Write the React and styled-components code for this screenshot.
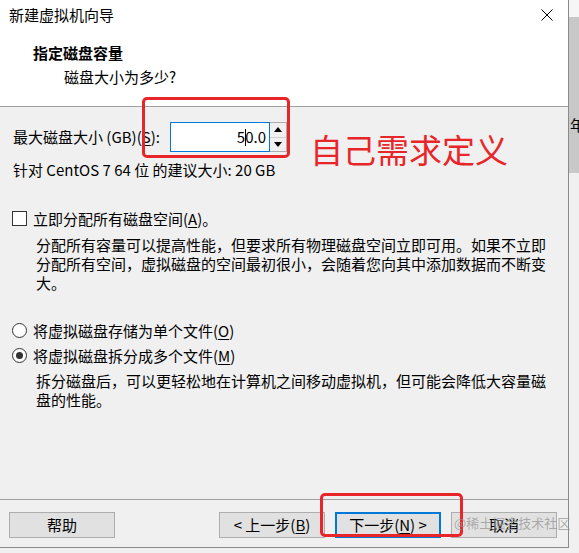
import React from "react";
import styled, { createGlobalStyle } from "styled-components";

const GlobalStyle = createGlobalStyle`
  html, body {
    margin: 0;
    padding: 0;
    background: #f0f0f0;
  }
  body {
    font-family: "Noto Sans CJK SC", "Noto Sans", sans-serif;
  }
`;

const Screen = styled.div`
  position: relative;
  display: flex;
  width: 579px;
  height: 553px;
  overflow: hidden;
  background: #f0f0f0;
  font-family: "Noto Sans CJK SC", "Noto Sans", sans-serif;
  font-size: 15px;
  color: #000;
`;

const Dialog = styled.div`
  display: flex;
  flex-direction: column;
  box-sizing: border-box;
  width: 569px;
  height: 548px;
  border-right: 1px solid #8a8a8a;
  border-bottom: 1px solid #8a8a8a;
  background: #f0f0f0;
`;

const Header = styled.div`
  box-sizing: border-box;
  height: 107px;
  background: #fff;
  border-bottom: 1px solid #a0a0a0;
`;

const TitleBar = styled.div`
  display: flex;
  justify-content: space-between;
  align-items: center;
  padding: 5px 15px 0 9px;
  line-height: 20px;
`;

const Heading = styled.div`
  margin-top: 18px;
  padding-left: 33px;
  font-weight: bold;
  line-height: 20px;
`;

const SubHeading = styled.div`
  margin-top: 4px;
  padding-left: 64px;
  line-height: 20px;
`;

const Body = styled.div`
  flex: 1;
  padding: 15px 0 0 13px;
`;

const SizeRow = styled.div`
  display: flex;
  align-items: center;
  height: 30px;
`;

const SizeLabel = styled.div`
  width: 157px;
  line-height: 20px;
`;

const Input = styled.div`
  box-sizing: border-box;
  width: 100px;
  height: 30px;
  border: 1px solid #0078d7;
  background: #fff;
  text-align: right;
  padding-right: 3px;
  line-height: 28px;
`;

const Caret = styled.span`
  display: inline-block;
  width: 1px;
  height: 17px;
  margin-right: -1px;
  background: #000;
  vertical-align: -3px;
`;

const Spinner = styled.div`
  display: flex;
  flex-direction: column;
  box-sizing: border-box;
  width: 17px;
  height: 30px;
  border: 1px solid #adadad;
  border-left: none;
`;

const SpinButton = styled.div`
  flex: 1;
  display: flex;
  align-items: center;
  justify-content: center;
  background: #f0f0f0;
  border-top: ${(p) => (p.$bottom ? "1px solid #d0d0d0" : "none")};
`;

const Line = styled.div`
  line-height: 20px;
  margin-top: ${(p) => p.$top || 0}px;
`;

const OptionRow = styled.div`
  display: flex;
  align-items: center;
  gap: 6px;
  height: 20px;
  margin-top: ${(p) => p.$top || 0}px;
  margin-left: -1px;
`;

const CheckBox = styled.div`
  box-sizing: border-box;
  width: 15px;
  height: 15px;
  border: 1px solid #333;
  background: #fff;
`;

const Radio = styled.div`
  display: flex;
  align-items: center;
  justify-content: center;
  box-sizing: border-box;
  width: 15px;
  height: 15px;
  border: 1px solid #333;
  border-radius: 50%;
  background: #fff;

  &::after {
    content: "";
    width: 7px;
    height: 7px;
    border-radius: 50%;
    background: ${(p) => (p.$checked ? "#333" : "transparent")};
  }
`;

const Desc = styled.div`
  margin-top: ${(p) => p.$top || 0}px;
  padding-left: 23px;
  line-height: 19px;
  white-space: nowrap;
`;

const U = styled.span`
  text-decoration: underline;
  text-underline-offset: 2px;
`;

const Footer = styled.div`
  display: flex;
  gap: 10px;
  padding: 12px 11px 9px 9px;
  border-top: 1px solid #a0a0a0;
`;

const Button = styled.div`
  box-sizing: border-box;
  display: flex;
  align-items: center;
  justify-content: center;
  width: 106px;
  height: 26px;
  background: #e1e1e1;
  border: ${(p) => (p.$default ? "2px solid #0078d7" : "1px solid #adadad")};
  line-height: 20px;
  margin-right: ${(p) => (p.$push ? "auto" : "0")};
`;

const Strip = styled.div`
  display: flex;
  flex-direction: column;
  width: 10px;
  height: 553px;
  overflow: hidden;
`;

const StripTop = styled.div`
  height: 17px;
  background: #f6f6f6;
`;

const StripGray = styled.div`
  height: 156px;
  background: #c8c8c8;
  padding: 98px 0 0 1px;
  box-sizing: border-box;
  line-height: 20px;
  white-space: nowrap;
`;

const StripRest = styled.div`
  flex: 1;
  background: #f0f0f0;
`;

const RedBox = styled.div`
  position: absolute;
  box-sizing: border-box;
  left: ${(p) => p.$x}px;
  top: ${(p) => p.$y}px;
  width: ${(p) => p.$w}px;
  height: ${(p) => p.$h}px;
  border: 3px solid #e8262a;
  border-radius: 5px;
  pointer-events: none;
`;

const RedNote = styled.div`
  position: absolute;
  left: 310px;
  top: 129px;
  font-size: 33px;
  line-height: 40px;
  color: #e8262a;
  white-space: nowrap;
`;

const Watermark = styled.div`
  position: absolute;
  left: 454px;
  top: 514px;
  font-size: 13px;
  line-height: 18px;
  color: rgba(150, 150, 150, 0.75);
  white-space: nowrap;
`;

function CloseIcon() {
  return (
    <svg width="12" height="12" viewBox="0 0 12 12">
      <path d="M0.5 0.5 L11.5 11.5 M11.5 0.5 L0.5 11.5" stroke="#000" strokeWidth="1" />
    </svg>
  );
}

function Arrow({ down }) {
  return (
    <svg width="8" height="5" viewBox="0 0 8 5">
      <path d={down ? "M0 0 H8 L4 5 Z" : "M0 5 H8 L4 0 Z"} fill="#000" />
    </svg>
  );
}

export default function App() {
  return (
    <Screen>
      <GlobalStyle />
      <Dialog>
        <Header>
          <TitleBar>
            <span>新建虚拟机向导</span>
            <CloseIcon />
          </TitleBar>
          <Heading>指定磁盘容量</Heading>
          <SubHeading>磁盘大小为多少?</SubHeading>
        </Header>

        <Body>
          <SizeRow>
            <SizeLabel>
              最大磁盘大小 (GB)(<U>S</U>):
            </SizeLabel>
            <Input>
              5<Caret />0.0
            </Input>
            <Spinner>
              <SpinButton>
                <Arrow />
              </SpinButton>
              <SpinButton $bottom>
                <Arrow down />
              </SpinButton>
            </Spinner>
          </SizeRow>
          <Line $top={8}>针对 CentOS 7 64 位 的建议大小: 20 GB</Line>

          <OptionRow $top={28}>
            <CheckBox />
            <span>
              立即分配所有磁盘空间(<U>A</U>)。
            </span>
          </OptionRow>
          <Desc $top={7}>
            <div>分配所有容量可以提高性能，但要求所有物理磁盘空间立即可用。如果不立即</div>
            <div>分配所有空间，虚拟磁盘的空间最初很小，会随着您向其中添加数据而不断变</div>
            <div>大。</div>
          </Desc>

          <OptionRow $top={28}>
            <Radio />
            <span>
              将虚拟磁盘存储为单个文件(<U>O</U>)
            </span>
          </OptionRow>
          <OptionRow $top={5}>
            <Radio $checked />
            <span>
              将虚拟磁盘拆分成多个文件(<U>M</U>)
            </span>
          </OptionRow>
          <Desc $top={6}>
            <div>拆分磁盘后，可以更轻松地在计算机之间移动虚拟机，但可能会降低大容量磁</div>
            <div>盘的性能。</div>
          </Desc>
        </Body>

        <Footer>
          <Button $push>帮助</Button>
          <Button>
            &lt; 上一步(<U>B</U>)
          </Button>
          <Button $default>
            下一步(<U>N</U>) &gt;
          </Button>
          <Button>取消</Button>
        </Footer>
      </Dialog>

      <Strip>
        <StripTop />
        <StripGray>年</StripGray>
        <StripRest />
      </Strip>

      <RedBox $x={142} $y={97} $w={148} $h={61} />
      <RedBox $x={320} $y={493} $w={143} $h={44} />
      <RedNote>自己需求定义</RedNote>
      <Watermark>@稀土掘金技术社区</Watermark>
    </Screen>
  );
}
